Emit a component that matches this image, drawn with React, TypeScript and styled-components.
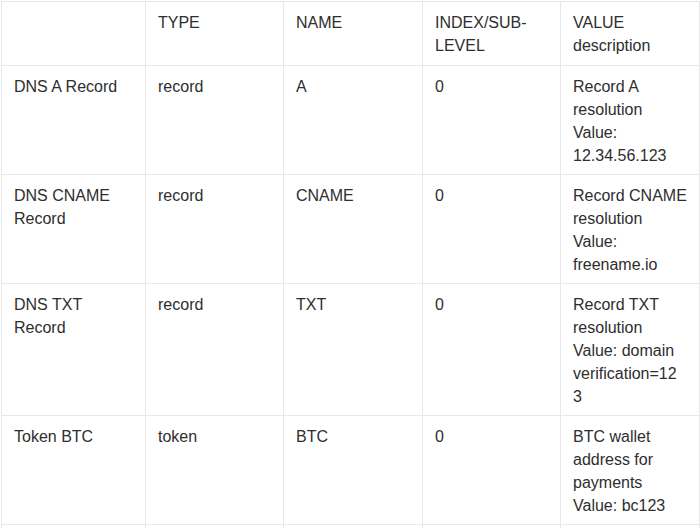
import React from "react";
import styled, { createGlobalStyle } from "styled-components";

const Global = createGlobalStyle`
  html, body { margin: 0; padding: 0; background: #fff; }
  body { font-family: "Liberation Sans", Arial, sans-serif; }
`;

const Wrap = styled.div`
  padding: 1px 0 0 1px;
`;

const Table = styled.table`
  border-collapse: collapse;
  table-layout: fixed;
  width: 698px;
  font-family: "Liberation Sans", Arial, sans-serif;
  font-size: 16px;
  line-height: 23px;
  color: #2e2e2e;
`;

const Cell = styled.td`
  border: 1px solid #e8e8e8;
  padding: 9px 12px 7px;
  vertical-align: top;
  text-align: left;
  font-weight: normal;
  word-break: break-word;
  overflow-wrap: anywhere;
`;

const Head = styled(Cell).attrs({ as: "th" })`
  padding: 9px 12px 8px;
`;

const FillerRow = styled.tr`
  height: 40px;
`;

const widths = [144, 138, 139, 138, 139];

const headers = ["", "TYPE", "NAME", "INDEX/SUB-LEVEL", "VALUE description"];

const rows: string[][] = [
  ["DNS A Record", "record", "A", "0", "Record A resolution Value: 12.34.56.123"],
  ["DNS CNAME Record", "record", "CNAME", "0", "Record CNAME resolution Value: freename.io"],
  ["DNS TXT Record", "record", "TXT", "0", "Record TXT resolution Value: domain verification=12\n3"],
  ["Token BTC", "token", "BTC", "0", "BTC wallet address for payments Value: bc123"],
];

const renderText = (t: string) =>
  t.split("\n").map((part, i) => (
    <React.Fragment key={i}>
      {i > 0 && <br />}
      {part}
    </React.Fragment>
  ));

export default function App() {
  return (
    <>
      <Global />
      <Wrap>
        <Table>
          <colgroup>
            {widths.map((w, i) => (
              <col key={i} style={{ width: w }} />
            ))}
          </colgroup>
          <thead>
            <tr>
              {headers.map((h, i) => (
                <Head key={i}>{h}</Head>
              ))}
            </tr>
          </thead>
          <tbody>
            {rows.map((r, i) => (
              <tr key={i}>
                {r.map((c, j) => (
                  <Cell key={j}>{renderText(c)}</Cell>
                ))}
              </tr>
            ))}
            <FillerRow>
              {widths.map((_, j) => (
                <Cell key={j} />
              ))}
            </FillerRow>
          </tbody>
        </Table>
      </Wrap>
    </>
  );
}
